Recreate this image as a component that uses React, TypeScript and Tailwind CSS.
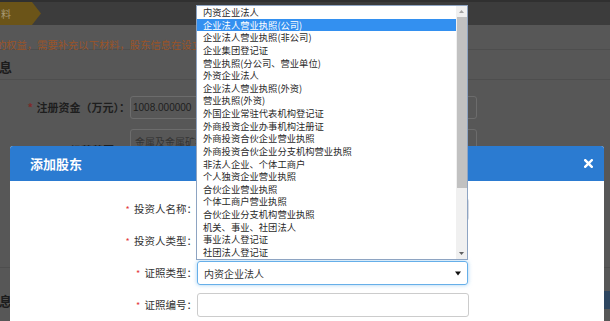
import React from "react";

const CJK = "font-['Noto_Sans_CJK_SC','Noto_Sans',sans-serif]";

const certTypes = [
  "内资企业法人",
  "企业法人营业执照(公司)",
  "企业法人营业执照(非公司)",
  "企业集团登记证",
  "营业执照(分公司、营业单位)",
  "外资企业法人",
  "企业法人营业执照(外资)",
  "营业执照(外资)",
  "外国企业常驻代表机构登记证",
  "外商投资企业办事机构注册证",
  "外商投资合伙企业营业执照",
  "外商投资合伙企业分支机构营业执照",
  "非法人企业、个体工商户",
  "个人独资企业营业执照",
  "合伙企业营业执照",
  "个体工商户营业执照",
  "合伙企业分支机构营业执照",
  "机关、事业、社团法人",
  "事业法人登记证",
  "社团法人登记证",
];

function BackgroundPage() {
  return (
    <div className="h-full w-full bg-[#575757]">
      {/* top step bar */}
      <div className="h-[25px] bg-[#3c3c3c] border-t-2 border-[#303030] flex">
        <div className="w-[41px] h-full bg-[#6b5418] [clip-path:polygon(0_0,78%_0,100%_50%,78%_100%,0_100%)] flex items-center pl-[1px] text-[10px] text-[#a89a76]">
          料
        </div>
      </div>
      <div className="h-[25px] border-b border-[#4e4e4e] pt-[14px] leading-[11px] text-[10.3px] text-[#9a5428] whitespace-nowrap ml-[-4px]">
        的权益，需要补充以下材料，股东信息在设立登记后不可修改。
      </div>
      <div className="h-[30px] border-b border-[#4e4e4e] pt-[9px] leading-[16px] text-[13px] font-bold text-[#1c1c1c] ml-[-40px] whitespace-nowrap">
        股东信息
      </div>
      <div className="flex items-center mt-[16px]">
        <div className="w-[130px] text-right text-[11px] font-bold text-[#1e1e1e] whitespace-nowrap">
          <span className="text-[#7d2b2b] mr-[1px]">*</span> 注册资金（万元）：
        </div>
        <div className="w-[347px] h-[23px] border border-[#6c6c6c] rounded-[3px] flex items-center pl-[2px] text-[10px] font-['Liberation_Sans',sans-serif] text-[#1e1e1e]">
          1008.000000
        </div>
      </div>
      <div className="flex items-start mt-[10px]">
        <div className="w-[125px] text-right pt-[13px] text-[11px] font-bold text-[#1e1e1e] whitespace-nowrap">
          经营范围：
        </div>
        <div className="ml-[5px] w-[347px] h-[124px] border border-[#6c6c6c] rounded-[3px] pl-[4px] pt-[4px] text-[10px] text-[#333333]">
          金属及金属矿批发
        </div>
      </div>
      <div className="mt-[14px] border-t border-[#4e4e4e] flex items-center pt-[23px]">
        <div className="text-[13px] font-bold text-[#1c1c1c] ml-[-40px] whitespace-nowrap">股东信息</div>
        <div className="flex-1" />
        <div className="w-[66px] h-[18px] bg-[#2e4660] mr-[-60px] mt-[-1px]" />
      </div>
    </div>
  );
}

function Field({ label, children }: { label: string; children: React.ReactNode }) {
  return (
    <div className="flex items-center h-[24px]">
      <div className="w-[187px] text-right text-[10.5px] text-[#333333] whitespace-nowrap leading-[24px]">
        <span className="text-[#e4393c] text-[9px] mr-[2px]">*</span> {label}：
      </div>
      {children}
    </div>
  );
}

function AddShareholderModal() {
  return (
    <div className="absolute left-[10px] top-[146px] w-[594px] h-[190px] bg-white rounded-t-[3px] overflow-hidden">
      <div className="h-[35px] bg-[#2b7bd1] flex items-center justify-between pl-[20px] pr-[11px]">
        <span className="text-[13px] font-bold text-white">添加股东</span>
        <svg width="9" height="9" viewBox="0 0 9 9">
          <path d="M1.2 1.2 L7.8 7.8 M7.8 1.2 L1.2 7.8" stroke="white" strokeWidth="2.4" strokeLinecap="square" />
        </svg>
      </div>
      <div className="pt-[16px] flex flex-col gap-[8px]">
        <Field label="投资人名称">
          <div className="w-[272px] h-[23px] border border-[#d6dbe4] rounded-[3px]" />
        </Field>
        <Field label="投资人类型">
          <div className="w-[271px] h-[23px] border border-[#cccccc] rounded-[3px]" />
        </Field>
        <Field label="证照类型">
          <div className="w-[271px] h-[24px] border border-[#66afe9] rounded-[3px] shadow-[0_0_4px_rgba(102,175,233,0.6)] flex items-center justify-between pl-[6px] pr-[6px] text-[10px] text-[#333333]">
            <span>内资企业法人</span>
            <svg width="6" height="5" viewBox="0 0 6 5">
              <path d="M0 0.5 H6 L3 4.5 Z" fill="#111111" />
            </svg>
          </div>
        </Field>
        <Field label="证照编号">
          <div className="w-[272px] h-[24px] border border-[#cccccc] rounded-[3px]" />
        </Field>
      </div>
    </div>
  );
}

function CertTypeList() {
  return (
    <div className="absolute left-[196px] top-[5px] w-[272px] border border-[#8ea4c2] bg-white flex">
      <div className="flex-1 flex flex-col">
        {certTypes.map((t, i) => (
          <div
            key={t}
            className={
              "h-[12.63px] leading-[12.63px] pl-[6px] text-[9.3px] whitespace-nowrap " +
              (i === 1 ? "bg-[#3390f0] text-white" : "text-[#2a2a2a]")
            }
          >
            {t}
          </div>
        ))}
      </div>
      <div className="w-[11px] bg-[#f0f0f0] flex flex-col items-center">
        <div className="h-[11px] flex items-center justify-center">
          <svg width="5" height="3" viewBox="0 0 5 3">
            <path d="M0 3 L2.5 0 L5 3 Z" fill="#a3a3a3" />
          </svg>
        </div>
        <div className="w-[10px] h-[171px] bg-[#c1c1c1]" />
        <div className="flex-1" />
        <div className="h-[11px] flex items-center justify-center">
          <svg width="5" height="3" viewBox="0 0 5 3">
            <path d="M0 0 L5 0 L2.5 3 Z" fill="#606060" />
          </svg>
        </div>
      </div>
    </div>
  );
}

export default function App() {
  return (
    <div className={"relative w-[610px] h-[321px] overflow-hidden " + CJK}>
      <BackgroundPage />
      <AddShareholderModal />
      <CertTypeList />
    </div>
  );
}
